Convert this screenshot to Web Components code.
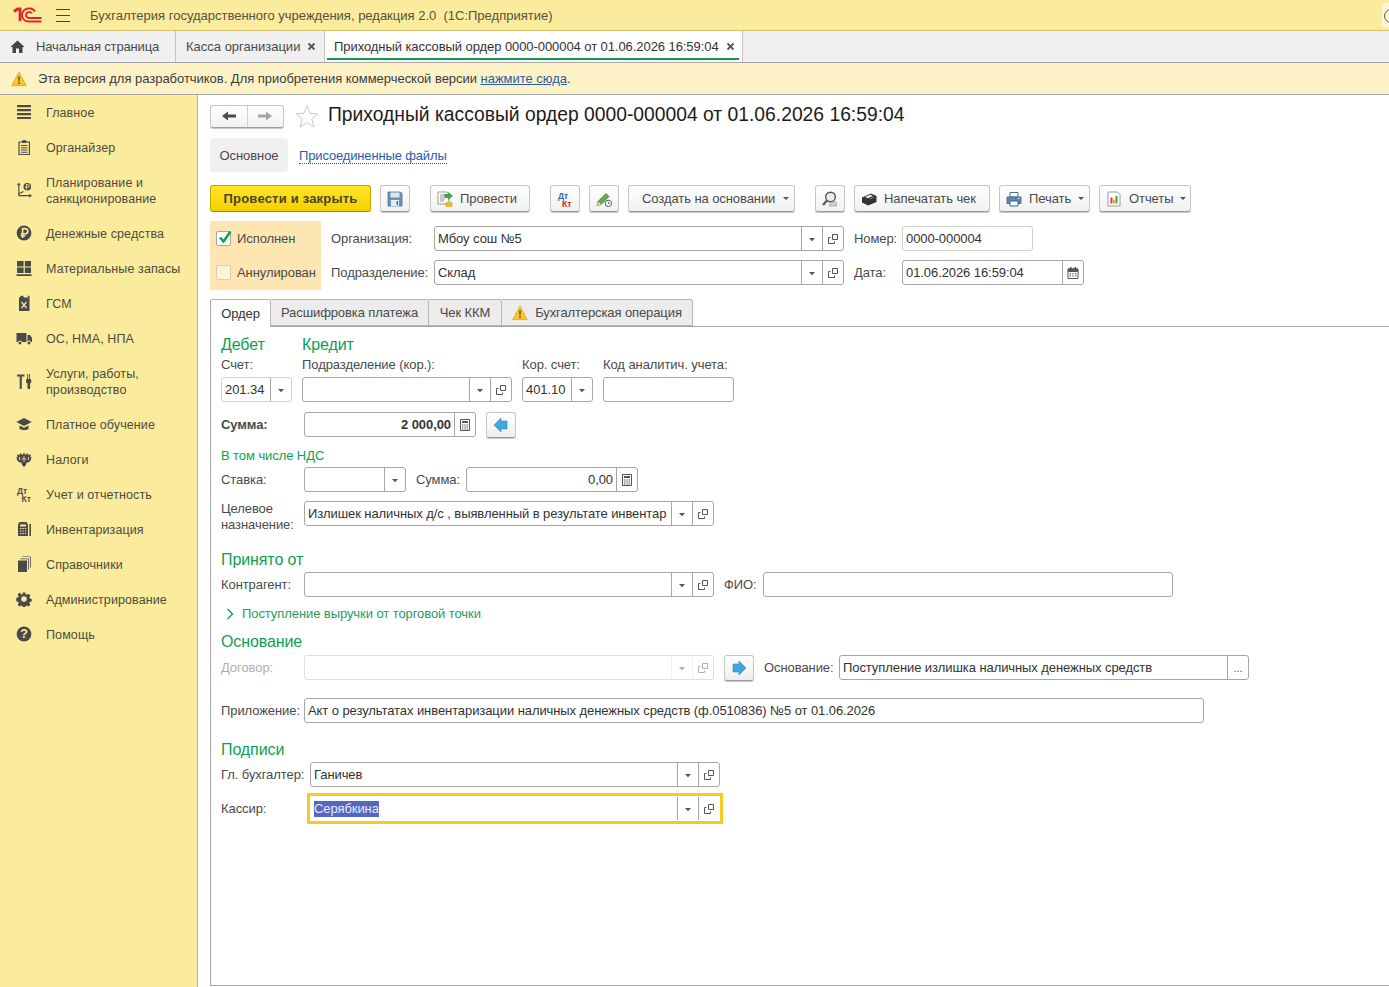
<!DOCTYPE html>
<html lang="ru">
<head>
<meta charset="utf-8">
<title>Приходный кассовый ордер</title>
<style>
html, body {
  margin: 0;
  height: 987px;
  overflow: hidden;
  background: #fff;
  font: 13px/16px "Liberation Sans", Arial, sans-serif;
  letter-spacing: -.08px;
  color: #4a4a4a;
}
.page { display: flex; flex-direction: column; height: 987px; }
.main { display: flex; flex: 1; min-height: 0; }
</style>
</head>
<body>
<div class="page">
  <app-header>Бухгалтерия государственного учреждения, редакция 2.0&nbsp; (1С:Предприятие)</app-header>
  <app-tabs></app-tabs>
  <dev-notice></dev-notice>
  <div class="main">
    <side-panel>
      <side-item icon="menu">Главное</side-item>
      <side-item icon="clip">Органайзер</side-item>
      <side-item icon="plan">Планирование и<br>санкционирование</side-item>
      <side-item icon="rub">Денежные средства</side-item>
      <side-item icon="blocks">Материальные запасы</side-item>
      <side-item icon="can">ГСМ</side-item>
      <side-item icon="truck">ОС, НМА, НПА</side-item>
      <side-item icon="tools">Услуги, работы,<br>производство</side-item>
      <side-item icon="cap">Платное обучение</side-item>
      <side-item icon="eagle">Налоги</side-item>
      <side-item icon="dtkt">Учет и отчетность</side-item>
      <side-item icon="calc">Инвентаризация</side-item>
      <side-item icon="books">Справочники</side-item>
      <side-item icon="gear">Администрирование</side-item>
      <side-item icon="help">Помощь</side-item>
    </side-panel>
    <order-form></order-form>
  </div>
</div>

<script>
const I = (body, w = 16, h = 16) =>
  `<svg xmlns="http://www.w3.org/2000/svg" width="${w}" height="${h}" viewBox="0 0 ${w} ${h}" style="display:block;flex:none">${body}</svg>`;

const warn = `<path d="M8 1.2 15.2 14.6H.8Z" fill="#fbc52c" stroke="#d9a514" stroke-width=".8" stroke-linejoin="round"/><path d="M7.2 5.4h1.6l-.3 5.2h-1ZM7.2 11.4h1.6v1.6H7.2Z" fill="#4a4a3a"/>`;

// sidebar icons, dark single colour
const sideIcons = {
  menu: `<path d="M1 1h14v2.200H1ZM1 5h14v2.200H1ZM1 9h14v2.200H1ZM1 13h14v2H1Z" fill="#4a4a4a"/>`,
  clip: `<path d="M3 3h10.400v12.500H3Z" fill="none" stroke="#4a4a4a" stroke-width="1.200"/><path d="M6 1.500h1.200V1h2v.5h1.200V4H6ZM5 6h6.400v1H5ZM5 8.300h6.400v1H5ZM5 10.600h6.400v1H5ZM5 12.800h6.400v1H5Z" fill="#4a4a4a"/>`,
  plan: `<g transform="scale(.94)"><path d="M3 2v12.500h13" fill="none" stroke="#4a4a4a" stroke-width="1.200"/><path d="M3 .5 1 3.500h4ZM17 14.500l-3-2v4Z" fill="#4a4a4a"/><path d="M3 12.500 8 10" stroke="#4a4a4a" stroke-width="1.200"/><circle cx="12" cy="5" r="4" fill="#4a4a4a"/><path d="M11 8V2.700h1.600a1.400 1.400 0 0 1 0 2.900H10" fill="none" stroke="#fbeb9c"/></g>`,
  rub: `<circle cx="8" cy="8" r="7.400" fill="#4a4a4a"/><path d="M6.600 13V3.600h2.600a2.500 2.500 0 0 1 0 5.200H4.800M4.800 10.800h4.600" fill="none" stroke="#fbeb9c" stroke-width="1.600"/>`,
  blocks: `<path d="M1 1h6.600v5.400H1ZM8.800 1H15v5.400H8.800ZM1 7.600h6.600V13H1ZM8.800 7.600H15V13H8.800ZM.5 14.200h15V16H.5Z" fill="#4a4a4a"/>`,
  can: `<path d="M3 3 5 .8h2L8 2.500h4V.8h1.500V16H3Z" fill="#4a4a4a"/><path d="M5.500 7 10.500 13M10.500 7 5.500 13" stroke="#fbeb9c" stroke-width="1.200"/>`,
  truck: `<path d="M.5 3h10v9H.5ZM11.500 5h2.600L16 8v4h-4.500Z" fill="#4a4a4a"/><circle cx="4" cy="13" r="2" fill="#4a4a4a" stroke="#fbeb9c"/><circle cx="13" cy="13" r="2" fill="#4a4a4a" stroke="#fbeb9c"/>`,
  tools: `<path d="M1 1.500h7.500v2H5.800V15a1 1 0 0 1-2.100 0V3.500H1Z" fill="#4a4a4a"/><path d="M11.200 1v4.500L10 7v2.500l1.500 1V15a1.300 1.300 0 0 0 2.600 0v-4.500l1.200-1V7l-1.300-1.500V1h-.9v5h-1V1Z" fill="#4a4a4a"/>`,
  cap: `<path d="M8 2 .3 6 8 10l7.700-4Z" fill="#4a4a4a"/><path d="M3.500 9.500V13c2.500 1.600 6.500 1.600 9 0V9.500L8 11.800Z" fill="#4a4a4a"/>`,
  eagle: `<path d="M8 1.500 9.500 4l2-2 .8 2 2.400-.8-.2 3 1-.2-.6 3-1.800 2.200-2.400.3-.7 2.400L8 16l-2-2.100-.7-2.400-2.400-.3L1 9l-.6-3 1 .2-.2-3 2.400.8.8-2 2 2Z" fill="#4a4a4a"/><path d="M8 5v6M5.500 8h5M3.500 6v3M12.500 6v3" stroke="#fbeb9c" stroke-width=".8"/>`,
  dtkt: `<text x="1" y="7.500" font-family="Liberation Sans" font-size="8.500" font-weight="700" letter-spacing="0" fill="#4a4a4a">Дт</text><text x="5.500" y="15.500" font-family="Liberation Sans" font-size="8.500" font-weight="700" letter-spacing="0" fill="#4a4a4a">Кт</text>`,
  calc: `<path d="M2 3.500 3.500 1h7L12 3.500V15H2Z" fill="#4a4a4a"/><path d="M4 3.500h6v2H4Z" fill="#fbeb9c"/><path d="M4 7.500h1.400M6.400 7.500h1.400M8.800 7.500h1.400M4 10h1.400M6.400 10h1.400M8.800 10h1.400M4 12.500h1.400M6.400 12.500h1.400M8.800 12.500h1.400" stroke="#fbeb9c" stroke-width="1.200"/><path d="M13.400 3H15v12h-1.600Z" fill="#4a4a4a"/>`,
  books: `<path d="M2 4.500h9V16H2Z" fill="#4a4a4a"/><path d="M4.200 3.200V2.400h8.600v11h-.8V3.200ZM6.200 1V.4h8.600v11.200H14V1Z" fill="#4a4a4a"/>`,
  gear: `<path d="M6.600.8h2.800l.4 2 1.500.7 1.800-1.100 2 2-1.100 1.800.7 1.500 2 .4v2.800l-2 .4-.7 1.500 1.100 1.800-2 2-1.800-1.100-1.500.7-.4 2H6.600l-.4-2-1.500-.7-1.800 1.100-2-2 1.100-1.800-.7-1.500-2-.4V6.900l2-.4.7-1.500L.7 3.200l2-2 1.800 1.100L6 3.600Z" fill="#4a4a4a" transform="translate(.9 .7) scale(.89)"/><circle cx="8" cy="8" r="2.800" fill="#fbeb9c"/>`,
  help: `<circle cx="8" cy="8" r="7.400" fill="#4a4a4a"/><text x="8" y="12.400" text-anchor="middle" font-family="Liberation Sans" font-size="12.500" font-weight="700" fill="#fbeb9c">?</text>`,
};

// coloured toolbar icons
const toolIcons = {
  save: `<path d="M1 1h12.500L15 2.500V15H1Z" fill="#6d93bd" stroke="#4c6f96" stroke-width=".8"/><path d="M3.500 1.500h9v5h-9Z" fill="#dbe6f1"/><path d="M4 9h8v6H4Z" fill="#e8eef5"/><path d="M9.500 10h1.600v4H9.500Z" fill="#4c6f96"/>`,
  post: `<path d="M1 1h9l2 2v10H1Z" fill="#fff" stroke="#9a9a9a"/><path d="M3 4h6M3 6h5M3 8h5M3 10h4" stroke="#9a9a9a"/><path d="M7 3h4V1l5 4-5 4V7H8Z" fill="#43a447"/><ellipse cx="12" cy="12.500" rx="3.400" ry="1.600" fill="#f2c63a" stroke="#b98f12" stroke-width=".5"/><ellipse cx="12" cy="14.500" rx="3.400" ry="1.600" fill="#f2c63a" stroke="#b98f12" stroke-width=".5"/>`,
  dtkt: `<text x="1" y="8" font-family="Liberation Sans" font-size="8.500" font-weight="700" letter-spacing="0" fill="#3a66a8">Дт</text><text x="5" y="15.500" font-family="Liberation Sans" font-size="8.500" font-weight="700" letter-spacing="0" fill="#cc2222">Кт</text>`,
  pen: `<path d="M1 14.500 2 10.500 10 2.500l3 3-8 8Z" fill="#6aa84f" stroke="#3d7a2d" stroke-width=".8"/><path d="M1 14.500 2 10.500l3 3Z" fill="#f0d9a0"/><circle cx="12.400" cy="12.400" r="3.200" fill="#fff" stroke="#555"/><path d="M12.400 10.600v2h1.600" fill="none" stroke="#555" stroke-width=".8"/>`,
  search: `<circle cx="8.500" cy="6" r="4.800" fill="#e8eef2" stroke="#555" stroke-width="1.400"/><path d="M5 9.600 1 14" stroke="#555" stroke-width="2.200"/><path d="M9 11h5.500v4H7Z" fill="#d0d0d0" stroke="#999" stroke-width=".6"/>`,
  receipt: `<path d="M1 6.500 10 2.500l5.500 2.500v6L7 14.500 1 11.500Z" fill="#333"/><path d="M4 6 9.500 3.700l2.500 1.200L6.800 7.300Z" fill="#eee"/><path d="M9 8l4-1.800" stroke="#888"/>`,
  print: `<path d="M4 1.500h8V6H4Z" fill="#fff" stroke="#4c6f96"/><path d="M1 6h14v6.500H1Z" fill="#5f88b0" stroke="#3f6288" stroke-width=".8"/><path d="M4 10h8v5H4Z" fill="#fff" stroke="#3f6288"/><path d="M12 7.400h1.600" stroke="#fff"/>`,
  report: `<path d="M2 1h9.500L14 3.500V15H2Z" fill="#fff" stroke="#9a9a9a"/><path d="M4.500 6.500h2v6h-2Z" fill="#d33"/><path d="M7 8.500h2v4H7Z" fill="#e2b628"/><path d="M9.500 5h2v7.500h-2Z" fill="#4a9a3f"/>`,
};

const fieldIcons = {
  drop: `<path d="M5 7h6L8 10.200Z" fill="#555"/>`,
  open: `<path d="M7.500 3.500h5v5h-5Z" fill="none" stroke="#555"/><path d="M5.500 6.500h-2v6h6v-2" fill="none" stroke="#555"/>`,
  calc: `<path d="M3.500 2.500h9v11h-9Z" fill="none" stroke="#555"/><path d="M5 4h6v2H5Z" fill="#555"/><path d="M5 8h1.400M7.300 8h1.400M9.600 8H11M5 10h1.400M7.300 10h1.400M9.600 10H11M5 12h1.400M7.300 12h1.400M9.600 12H11" stroke="#555"/>`,
  date: `<path d="M3 4h10v9.500H3Z" fill="none" stroke="#555"/><path d="M3 3.500h10V7H3ZM5 2h1.500v2H5ZM9.500 2H11v2H9.500Z" fill="#555"/><path d="M4.500 8.800h1.500M7.200 8.800h1.500M10 8.800h1.500M4.500 11h1.500M7.200 11h1.500M10 11h1.500" stroke="#555"/>`,
};

class AppHeader extends HTMLElement {
  connectedCallback() {
    this.attachShadow({ mode: "open" }).innerHTML = `<style>
:host { display: flex; align-items: center; height: 30px; flex: none; background: #fbeb9c; border-bottom: 1px solid #cfc06e; position: relative; color: #55513f; }
.logo { margin-left: 13px; }
.burger { margin-left: 14px; width: 14px; height: 11px; border-top: 1px solid #444; border-bottom: 1px solid #444; position: relative; }
.burger::after { content: ""; position: absolute; left: 0; right: 0; top: 5px; border-top: 1px solid #444; }
.title { margin-left: 20px; letter-spacing: 0; padding-top: 1px; }
.find { position: absolute; left: 1382px; top: 3px; width: 30px; height: 24px; background: #fdf6d2; border-radius: 3px; overflow: hidden; }
.find i { position: absolute; left: 2px; top: 6px; width: 12px; height: 12px; border: 1.400px solid #555; border-radius: 50%; }
</style>
<svg class="logo" width="29" height="16" viewBox="0 0 29 16" fill="none" stroke="#e0262a">
  <path d="M1 4.500 4.500 2H7V14" stroke-width="2.800"/>
  <path d="M28.500 14.500H15.500a6.200 6.200 0 0 1 0-13h1.500a6 6 0 0 1 5 3" stroke-width="1.800"/>
  <path d="M28.500 11H16a2.800 2.800 0 0 1 0-5.800h1a3 3 0 0 1 2 1" stroke-width="1.800"/>
</svg>
<div class="burger"></div>
<div class="title"><slot></slot></div>
<div class="find"><i></i></div>`;
  }
}

class AppTabs extends HTMLElement {
  connectedCallback() {
    const x = I(`<path d="M1.500 1.500 7.500 7.500M7.500 1.500 1.500 7.500" stroke="#555" stroke-width="1.800"/>`, 9, 9);
    this.attachShadow({ mode: "open" }).innerHTML = `<style>
:host { display: flex; height: 31px; flex: none; background: #f0f0f0; border-bottom: 1px solid #a6a6a6; color: #4a4a4a; }
.tab { display: flex; align-items: center; border-right: 1px solid #c4c4c4; box-sizing: border-box; padding-left: 10px; position: relative; white-space: nowrap; }
.home { width: 176px; padding-left: 10px; gap: 11px; letter-spacing: -.15px; }
.kassa { width: 149px; letter-spacing: 0; }
.active { background: #fff; width: 418px; padding-left: 9px; color: #333; letter-spacing: -.07px; }
.active::after { content: ""; position: absolute; left: 2px; right: 3px; bottom: 2px; height: 2px; background: #0f9d4f; }
.tab i { margin-left: 7px; display: block; }
</style>
<div class="tab home">${I(`<path d="M7.500 1.500 .5 8h2v6h3.500V9.500h3V14H12.500V8h2Z" fill="#444"/>`, 15, 15)}<span>Начальная страница</span></div>
<div class="tab kassa"><span>Касса организации</span><i>${x}</i></div>
<div class="tab active"><span>Приходный кассовый ордер 0000-000004 от 01.06.2026 16:59:04</span><i>${x}</i></div>`;
  }
}

class DevNotice extends HTMLElement {
  connectedCallback() {
    this.attachShadow({ mode: "open" }).innerHTML = `<style>
:host { display: flex; align-items: center; height: 31px; flex: none; background: #fdf2c5; border-bottom: 1px solid #a6a6a6; color: #3c3c3c; letter-spacing: -.03px; }
svg { margin: 0 11px 0 11px; }
span { padding-top: 1px; }
a { color: #2a5ca8; text-decoration: underline; }
</style>
${I(warn)}<span>Эта версия для разработчиков. Для приобретения коммерческой версии <a>нажмите сюда</a>.</span>`;
  }
}

class SidePanel extends HTMLElement {
  connectedCallback() {
    this.attachShadow({ mode: "open" }).innerHTML = `<style>
:host { display: block; width: 197px; flex: none; box-sizing: content-box; background: #fbeb9c; border-right: 1px solid #c8bb78; }
</style><slot></slot>`;
  }
}

class SideItem extends HTMLElement {
  connectedCallback() {
    const icon = sideIcons[this.getAttribute("icon")];
    this.attachShadow({ mode: "open" }).innerHTML = `<style>
:host { display: flex; align-items: center; padding: 10px 0 9px 16px; color: #4c4b40; line-height: 16px; font-size: 12.500px; letter-spacing: .1px; }
.t { margin-left: 14px; }
svg { transform: translateY(-1px); }
</style>${I(icon)}<div class="t"><slot></slot></div>`;
  }
}

class ToolBtn extends HTMLElement {
  connectedCallback() {
    const icon = this.getAttribute("icon");
    const w = this.getAttribute("w");
    const pl = this.getAttribute("pl");
    const hasDrop = this.hasAttribute("drop");
    this.attachShadow({ mode: "open" }).innerHTML = `<style>
:host { display: flex; flex: none; box-sizing: border-box; height: 27px; align-items: center; justify-content: ${pl ? "flex-start" : "center"}; padding-left: ${pl || 0}px; gap: 7px; width: ${w}px;
  background: linear-gradient(#fff, #f1f1f1); border: 1px solid #c6c6c6; border-bottom-color: #9d9d9d; border-radius: 3px; box-shadow: 0 1px 0 #c8c8c8; color: #4a4a4a; white-space: nowrap; }
:host([yellow]) { background: linear-gradient(#ffe629, #f6cf00); border-color: #c4a800; border-bottom-color: #a08a00; font-weight: 700; color: #4a4420; box-shadow: none; letter-spacing: .2px; }
.d { width: 0; height: 0; border: 3px solid transparent; border-top: 3px solid #555; border-bottom: 0; margin-left: auto; margin-right: 5px; }
</style>${icon ? I(toolIcons[icon]) : ""}<slot></slot>${hasDrop ? `<i class="d"></i>` : ""}`;
  }
}

class FormField extends HTMLElement {
  connectedCallback() {
    const w = this.getAttribute("w");
    const value = this.getAttribute("value") || "";
    const btns = (this.getAttribute("btns") || "").split(" ").filter(Boolean);
    const sel = this.hasAttribute("selected");
    const html = btns.map((b) => b === "more"
      ? `<div class="b more">...</div>`
      : `<div class="b">${I(fieldIcons[b])}</div>`).join("");
    this.attachShadow({ mode: "open" }).innerHTML = `<style>
:host { display: flex; flex: none; box-sizing: border-box; height: 25px; width: ${w}px; background: #fff; border: 1px solid #a6a6a6; border-radius: 3px; color: #333; }
:host([light]) { border-color: #d0d0d0; }
:host([disabled]) { border-color: #dedede; }
:host([disabled]) .b { border-color: #dedede; opacity: .45; }
:host([focused]) { border-color: #fff; outline: 3px solid #f6c924; border-radius: 0; }
.v { flex: 1; min-width: 0; padding: 0 3px; display: flex; align-items: center; white-space: nowrap; overflow: hidden; }
:host([right]) .v { justify-content: flex-end; }
:host([bold]) .v { font-weight: 700; }
.sel { background: #5568c0; color: #e6e9f8; }
.b { width: 20px; flex: none; border-left: 1px solid #a6a6a6; display: flex; align-items: center; justify-content: center; }
.more { color: #555; font-size: 11px; }
</style><div class="v"><span class="${sel ? "sel" : ""}">${value}</span></div>${html}`;
  }
}

class ArrowBtn extends HTMLElement {
  connectedCallback() {
    const right = this.hasAttribute("right");
    const d = right ? "M2 4h6V1l7 7-7 7v-3H2Z" : "M14 4H8V1L1 8l7 7v-3h6Z";
    this.attachShadow({ mode: "open" }).innerHTML = `<style>
:host { display: flex; flex: none; box-sizing: border-box; width: 30px; height: 26px; align-items: center; justify-content: center; background: linear-gradient(#fff, #eee); border: 1px solid #c6c6c6; border-bottom-color: #9d9d9d; border-radius: 3px; box-shadow: 0 1px 0 #c8c8c8; }
</style>${I(`<path d="${d}" fill="#41a5e0" stroke="#2f86bf" stroke-width=".6"/>`)}`;
  }
}

class FormTabs extends HTMLElement {
  connectedCallback() {
    this.attachShadow({ mode: "open" }).innerHTML = `<style>
:host { display: flex; height: 28px; margin-bottom: -1px; position: relative; z-index: 1; color: #4a4a4a; flex: none; letter-spacing: -.1px; }
.t { box-sizing: border-box; display: flex; align-items: center; justify-content: center; gap: 7px; height: 27px; background: #ececec; border: 1px solid #b5b5b5; border-left: 0; border-radius: 0 3px 0 0; white-space: nowrap; }
.a { height: 28px; background: #fff; border-left: 1px solid #a6a6a6; border-bottom: 0; border-radius: 3px 3px 0 0; color: #333; }
</style>
<div class="t a" style="width:61px">Ордер</div>
<div class="t" style="width:158px">Расшифровка платежа</div>
<div class="t" style="width:73px">Чек ККМ</div>
<div class="t" style="width:191px">${I(warn)}Бухгалтерская операция</div>`;
  }
}

class OrderForm extends HTMLElement {
  connectedCallback() {
    this.attachShadow({ mode: "open" }).innerHTML = `<style>
:host { display: flex; flex-direction: column; flex: 1; min-width: 0; padding: 9px 0 0 12px; height: 892px; box-sizing: border-box; color: #4a4a4a; overflow: hidden; }
.top { display: flex; align-items: center; height: 24px; flex: none; }
.nav { display: flex; width: 74px; height: 23px; box-sizing: border-box; border: 1px solid #c6c6c6; border-bottom-color: #9d9d9d; border-radius: 3px; box-shadow: 0 1px 0 #c8c8c8; background: linear-gradient(#fff, #f2f2f2); }
.nav div { flex: 1; display: flex; align-items: center; justify-content: center; }
.nav div + div { border-left: 1px solid #d0d0d0; }
h1 { margin: -2px 0 0 9px; font: 400 19.300px/24px "Liberation Sans", Arial, sans-serif; letter-spacing: 0; color: #1c1c1c; white-space: nowrap; }
.star { margin-left: 11px; }
.views { display: flex; align-items: center; height: 34px; margin-top: 10px; flex: none; }
.views b { font-weight: 400; display: flex; align-items: center; justify-content: center; width: 78px; height: 34px; padding-top: 1px; box-sizing: border-box; background: #f0f0f0; border-radius: 4px; }
.views a { margin: 2px 0 0 11px; color: #2a5ca8; border-bottom: 1px dotted #2a5ca8; line-height: 14px; letter-spacing: -.15px; }
.bar { display: flex; gap: 9px; margin-top: 13px; height: 27px; flex: none; }
.bar i { width: 2px; flex: none; }
.head { display: flex; margin-top: 9px; height: 69px; flex: none; }
.flags { box-sizing: border-box; width: 111px; background: #fee6b3; padding: 10px 0 0 6px; display: flex; flex-direction: column; gap: 19px; }
.flag { display: flex; align-items: center; gap: 6px; height: 15px; white-space: nowrap; }
.box { width: 15px; height: 15px; box-sizing: border-box; border: 1px solid #a6a6a6; border-radius: 2px; background: #fff; flex: none; position: relative; }
.box.off { background: #fef3d9; border-color: #d8cdb0; }
.box svg { position: absolute; left: 0; top: -3px; }
.fields { margin-left: 10px; padding-top: 5px; display: flex; flex-direction: column; gap: 9px; }
.row { display: flex; align-items: center; height: 25px; white-space: nowrap; flex: none; }
.row > span { flex: none; }
.sp10 { margin-left: 10px; }
.frame { flex: 1; margin-bottom: 1px; border: 1px solid #a6a6a6; border-right: 0; padding: 7px 0 0 10px; min-height: 0; }
.cols { display: grid; grid-template-columns: 71px 210px 71px 131px; column-gap: 10px; grid-template-rows: 20px 23px 25px; }
.cols span { line-height: 15px; padding-top: 3px; white-space: nowrap; }
h2 { margin: 0; font: 400 16px/22px "Liberation Sans", Arial, sans-serif; letter-spacing: -.1px; color: #0d9f52; height: 20px; white-space: nowrap; }
.green { color: #0d9f52; line-height: 18px; height: 16px; }
.lbl { width: 83px; }
.dim { color: #b0b0b0; }
</style>
<div class="top">
  <div class="nav">
    <div>${I(`<path d="M1 8 7 3.500V6.500H15V9.500H7V12.500Z" fill="#4a4a4a"/>`)}</div>
    <div>${I(`<path d="M15 8 9 3.500V6.500H1V9.500H9V12.500Z" fill="#a6a6a6"/>`)}</div>
  </div>
  <svg class="star" width="24" height="24" viewBox="0 0 24 24"><path d="M12 1.500 15 9.300 23 9.800 16.800 15 18.900 23 12 18.500 5.100 23 7.200 15 1 9.800 9 9.300Z" fill="#fff" stroke="#c9c9c9"/></svg>
  <h1>Приходный кассовый ордер 0000-000004 от 01.06.2026 16:59:04</h1>
</div>
<div class="views"><b>Основное</b><a>Присоединенные файлы</a></div>
<div class="bar">
  <tool-btn yellow w="161">Провести и закрыть</tool-btn>
  <tool-btn w="30" icon="save"></tool-btn><i></i>
  <tool-btn w="100" icon="post" pl="6">Провести</tool-btn><i></i>
  <tool-btn w="30" icon="dtkt"></tool-btn>
  <tool-btn w="30" icon="pen"></tool-btn>
  <tool-btn w="167" pl="13" drop>Создать на основании</tool-btn><i></i>
  <tool-btn w="30" icon="search"></tool-btn>
  <tool-btn w="136" icon="receipt" pl="6">Напечатать чек</tool-btn>
  <tool-btn w="91" icon="print" pl="6" drop>Печать</tool-btn>
  <tool-btn w="92" icon="report" pl="6" drop>Отчеты</tool-btn>
</div>
<div class="head">
  <div class="flags">
    <div class="flag"><div class="box">${I(`<path d="M3 8.500 6.500 12.500 13.500 2.500" fill="none" stroke="#12a24e" stroke-width="2.600"/>`)}</div>Исполнен</div>
    <div class="flag"><div class="box off"></div>Аннулирован</div>
  </div>
  <div class="fields">
    <div class="row"><span style="width:103px">Организация:</span><form-field w="410" value="Мбоу сош №5" btns="drop open"></form-field><span class="sp10" style="width:48px">Номер:</span><form-field light w="131" value="0000-000004"></form-field></div>
    <div class="row"><span style="width:103px">Подразделение:</span><form-field w="410" value="Склад" btns="drop open"></form-field><span class="sp10" style="width:48px">Дата:</span><form-field w="182" value="01.06.2026 16:59:04" btns="date"></form-field></div>
  </div>
</div>
<form-tabs style="margin-top:9px"></form-tabs>
<div class="frame">
  <div class="cols">
    <h2>Дебет</h2><h2 style="grid-column:span 3">Кредит</h2>
    <span>Счет:</span><span>Подразделение (кор.):</span><span>Кор. счет:</span><span>Код аналитич. учета:</span>
    <form-field light w="71" value="201.34" btns="drop"></form-field>
    <form-field w="210" btns="drop open"></form-field>
    <form-field w="71" value="401.10" btns="drop"></form-field>
    <form-field w="131"></form-field>
  </div>
  <div class="row" style="margin-top:10px"><span class="lbl"><b>Сумма:</b></span><form-field w="172" value="2 000,00" right bold btns="calc"></form-field><arrow-btn style="margin-left:10px"></arrow-btn></div>
  <div class="green" style="margin-top:10px">В том числе НДС</div>
  <div class="row" style="margin-top:4px"><span class="lbl">Ставка:</span><form-field w="102" btns="drop"></form-field><span class="sp10" style="width:50px">Сумма:</span><form-field w="172" value="0,00" right btns="calc"></form-field></div>
  <div class="row" style="margin-top:9px;align-items:flex-start"><span class="lbl">Целевое<br>назначение:</span><form-field w="410" value="Излишек наличных д/с , выявленный в результате инвентар" btns="drop open"></form-field></div>
  <h2 style="margin-top:23px">Принято от</h2>
  <div class="row" style="margin-top:3px"><span class="lbl">Контрагент:</span><form-field w="410" btns="drop open"></form-field><span class="sp10" style="width:39px">ФИО:</span><form-field w="410"></form-field></div>
  <div class="green" style="margin-top:9px;display:flex;align-items:center;gap:8px;padding-left:5px;color:#2a9a5e">${I(`<path d="M1.500 2 6.500 7 1.500 12" fill="none" stroke="#0d9f52" stroke-width="1.300"/>`, 8, 14)}<span>Поступление выручки от торговой точки</span></div>
  <h2 style="margin-top:9px">Основание</h2>
  <div class="row" style="margin-top:4px"><span class="lbl dim">Договор:</span><form-field disabled w="410" btns="drop open"></form-field><arrow-btn right style="margin-left:10px"></arrow-btn><span class="sp10" style="width:75px">Основание:</span><form-field w="410" value="Поступление излишка наличных денежных средств" btns="more"></form-field></div>
  <div class="row" style="margin-top:18px"><span class="lbl">Приложение:</span><form-field w="900" value="Акт о результатах инвентаризации наличных денежных средств (ф.0510836) №5 от 01.06.2026"></form-field></div>
  <h2 style="margin-top:16px">Подписи</h2>
  <div class="row" style="margin-top:3px"><span style="width:89px">Гл. бухгалтер:</span><form-field w="410" value="Ганичев" btns="drop open"></form-field></div>
  <div class="row" style="margin-top:6px;height:31px"><span style="width:89px">Кассир:</span><form-field focused selected w="410" value="Серябкина" btns="drop open"></form-field></div>
</div>`;
  }
}

customElements.define("app-header", AppHeader);
customElements.define("app-tabs", AppTabs);
customElements.define("dev-notice", DevNotice);
customElements.define("side-panel", SidePanel);
customElements.define("side-item", SideItem);
customElements.define("tool-btn", ToolBtn);
customElements.define("form-field", FormField);
customElements.define("arrow-btn", ArrowBtn);
customElements.define("form-tabs", FormTabs);
customElements.define("order-form", OrderForm);
</script>
</body>
</html>
